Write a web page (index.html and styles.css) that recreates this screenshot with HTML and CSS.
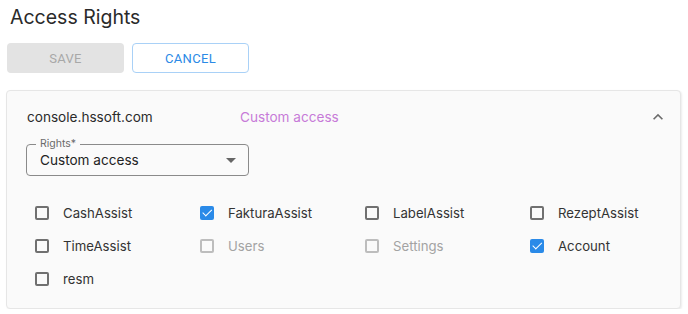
FILE: index.html
```html
<!DOCTYPE html>
<html lang="en">
<head>
    <meta charset="UTF-8">
    <meta name="viewport" content="width=device-width, initial-scale=1.0">
    <title>Access Rights</title>
    <link rel="stylesheet" href="styles.css">
</head>
<body>
    <div class="page">
        <h1 class="title">Access Rights</h1>

        <div class="actions">
            <button class="btn btn-save" disabled>SAVE</button>
            <button class="btn btn-cancel">CANCEL</button>
        </div>

        <div class="card">
            <div class="card-header">
                <span class="domain">console.hssoft.com</span>
                <span class="access-state">Custom access</span>
                <svg class="chevron" viewBox="0 0 24 24" width="20" height="20">
                    <path d="M12 8l-6 6 1.41 1.41L12 10.83l4.59 4.58L18 14z" fill="#6b6b6b"/>
                </svg>
            </div>

            <div class="select">
                <span class="select-label">Rights*</span>
                <span class="select-value">Custom access</span>
                <span class="select-arrow"></span>
            </div>

            <div class="rights-grid">
                <label class="check"><span class="box"></span>CashAssist</label>
                <label class="check"><span class="box checked"></span>FakturaAssist</label>
                <label class="check"><span class="box"></span>LabelAssist</label>
                <label class="check"><span class="box"></span>RezeptAssist</label>

                <label class="check"><span class="box"></span>TimeAssist</label>
                <label class="check disabled"><span class="box"></span>Users</label>
                <label class="check disabled"><span class="box"></span>Settings</label>
                <label class="check"><span class="box checked"></span>Account</label>

                <label class="check"><span class="box"></span>resm</label>
            </div>
        </div>
    </div>
</body>
</html>
```

FILE: styles.css
```css
body {
    margin: 0;
    font-family: Inter, "Noto Sans", sans-serif;
    background-color: #fff;
    color: #222;
}

.page {
    padding: 0 7px 0 6px;
}

.title {
    margin: 0;
    padding: 2px 0 0 4px;
    font-size: 19.5px;
    line-height: 30px;
    font-weight: 400;
    color: #2a2a2a;
}

.actions {
    display: flex;
    gap: 8px;
    margin-top: 11px;
    padding-left: 1px;
}

.btn {
    width: 117px;
    height: 30px;
    border-radius: 4px;
    font-family: Roboto, "Noto Sans", sans-serif;
    font-size: 13px;
    font-weight: 400;
    letter-spacing: 0.3px;
    cursor: pointer;
}

.btn-save {
    background-color: #e3e3e3;
    border: none;
    color: #a8a8a8;
}

.btn-cancel {
    background-color: #fff;
    border: 1px solid #a9d1f7;
    color: #2b8ae6;
}

.card {
    margin-top: 17px;
    background-color: #fafafa;
    border: 1px solid #e6e6e6;
    border-radius: 4px;
    box-shadow: 1px 1px 2px rgba(0, 0, 0, 0.08);
    padding: 16px 20px 13px 19px;
}

.card-header {
    display: flex;
    align-items: center;
    height: 20px;
    padding-left: 1px;
}

.domain {
    width: 213px;
    font-size: 13.6px;
    color: #2a2a2a;
}

.access-state {
    font-size: 13.6px;
    color: #c77ad8;
}

.chevron {
    margin-left: auto;
    margin-right: -8px;
}

.select {
    position: relative;
    display: flex;
    align-items: center;
    width: 223px;
    height: 32px;
    margin-top: 17px;
    padding: 0 12px 0 13px;
    box-sizing: border-box;
    border: 1px solid #8a8a8a;
    border-radius: 4px;
}

.select-label {
    position: absolute;
    top: -7px;
    left: 9px;
    padding: 0 4px;
    background-color: #fafafa;
    font-size: 10.5px;
    line-height: 12px;
    color: #6b6b6b;
}

.select-value {
    flex: 1;
    font-size: 13.6px;
    color: #222;
}

.select-arrow {
    width: 0;
    height: 0;
    border-left: 5px solid transparent;
    border-right: 5px solid transparent;
    border-top: 5px solid #666;
}

.rights-grid {
    display: grid;
    grid-template-columns: repeat(4, 165px);
    grid-auto-rows: 33px;
    margin-top: 20px;
    padding-left: 9px;
}

.check {
    display: flex;
    align-items: center;
    font-size: 13.2px;
    color: #333;
}

.box {
    width: 10px;
    height: 10px;
    margin-right: 14px;
    border: 2px solid #707070;
    border-radius: 2px;
}

.box.checked {
    position: relative;
    width: 14px;
    height: 14px;
    border: none;
    background-color: #2a8ae8;
}

.box.checked::after {
    content: "";
    position: absolute;
    left: 4.5px;
    top: 1.5px;
    width: 3.5px;
    height: 7.5px;
    border-right: 1.6px solid #fff;
    border-bottom: 1.6px solid #fff;
    transform: rotate(45deg);
}

.check.disabled {
    color: #a3a3a3;
}

.check.disabled .box {
    border-color: #bdbdbd;
}
```
